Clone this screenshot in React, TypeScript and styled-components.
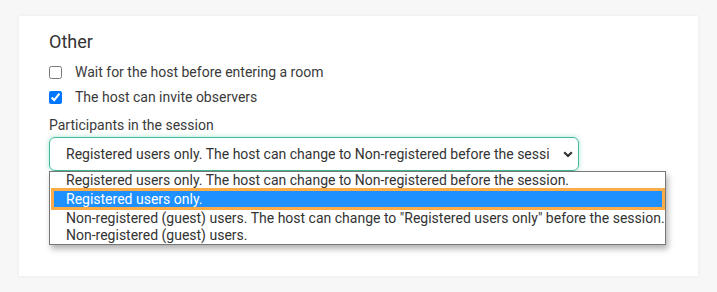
import * as React from 'react'
import styled, { createGlobalStyle } from 'styled-components'

const options = [
    'Registered users only. The host can change to Non-registered before the session.',
    'Registered users only.',
    'Non-registered (guest) users. The host can change to "Registered users only" before the session.',
    'Non-registered (guest) users.',
]

export default function App(): React.ReactElement {
    return (
        <>
            <GlobalStyle />
            <Page>
                <Card>
                    <Heading>Other</Heading>
                    <CheckRow>
                        <input type="checkbox" />
                        <span>Wait for the host before entering a room</span>
                    </CheckRow>
                    <CheckRow>
                        <input type="checkbox" defaultChecked />
                        <span>The host can invite observers</span>
                    </CheckRow>
                    <FieldLabel>Participants in the session</FieldLabel>
                    <SelectWrap>
                        <SelectBox>
                            <SelectText>{options[0]}</SelectText>
                            <svg width="10" height="7" viewBox="0 0 10 7">
                                <polyline
                                    points="1.2,1.2 5,5 8.8,1.2"
                                    fill="none"
                                    stroke="#333"
                                    strokeWidth="2.2"
                                />
                            </svg>
                        </SelectBox>
                        <OptionList>
                            {options.map((o, i) => (
                                <Option key={o} active={i === 1}>
                                    {o}
                                </Option>
                            ))}
                        </OptionList>
                    </SelectWrap>
                </Card>
            </Page>
        </>
    )
}

const GlobalStyle = createGlobalStyle`
    html, body {
        margin: 0;
        padding: 0;
        background: #f7f7f7;
    }
    body {
        font-family: Roboto, "Liberation Sans", sans-serif;
        color: #333;
    }
`

const Page = styled.div`
    width: 717px;
    height: 292px;
    padding: 16px 19px 0 19px;
    box-sizing: border-box;
`

const Card = styled.div`
    width: 679px;
    height: 260px;
    box-sizing: border-box;
    background: #fff;
    box-shadow: 0 0 4px rgba(0, 0, 0, 0.06);
    padding: 15px 30px 0 30px;
    display: flex;
    flex-direction: column;
`

const Heading = styled.div`
    font-size: 18px;
    line-height: 21px;
    color: #333;
    margin-bottom: 8px;
`

const CheckRow = styled.label`
    display: flex;
    align-items: center;
    gap: 13px;
    font-size: 14px;
    line-height: 17px;
    color: #3a3a3a;
    height: 25px;

    input {
        margin: 0;
        width: 13px;
        height: 13px;
    }
`

const FieldLabel = styled.div`
    font-size: 14px;
    line-height: 17px;
    color: #3a3a3a;
    margin-top: 7px;
    margin-bottom: 3px;
`

const SelectWrap = styled.div`
    position: relative;
`

const SelectBox = styled.div`
    width: 530px;
    height: 34px;
    box-sizing: border-box;
    border: 1px solid #3dbb9a;
    border-radius: 6px;
    box-shadow: 0 0 4px 1px rgba(61, 187, 154, 0.3);
    display: flex;
    align-items: center;
    padding: 0 5px 0 16px;
    gap: 14px;
    font-size: 14px;
    color: #333;

    svg {
        flex: none;
    }
`

const SelectText = styled.span`
    flex: 1;
    overflow: hidden;
    white-space: nowrap;
`

const OptionList = styled.div`
    position: absolute;
    top: 34px;
    left: 0;
    width: 617px;
    box-sizing: border-box;
    background: #fff;
    border: 1px solid #777;
    box-shadow: 2px 4px 6px rgba(0, 0, 0, 0.3);
    display: flex;
    flex-direction: column;
    z-index: 2;
`

const Option = styled.div<{ active?: boolean }>`
    font-size: 14px;
    line-height: ${(p) => (p.active ? '16px' : '17px')};
    white-space: nowrap;
    color: ${(p) => (p.active ? '#fff' : '#333')};
    background: ${(p) => (p.active ? '#1e90ff' : 'transparent')};
    padding-left: ${(p) => (p.active ? '12px' : '16px')};
    margin: ${(p) => (p.active ? '2px 3px 3px 4px' : '0')};
    box-shadow: ${(p) => (p.active ? '0 0 0 3px #fbab47' : 'none')};
    position: relative;
`
